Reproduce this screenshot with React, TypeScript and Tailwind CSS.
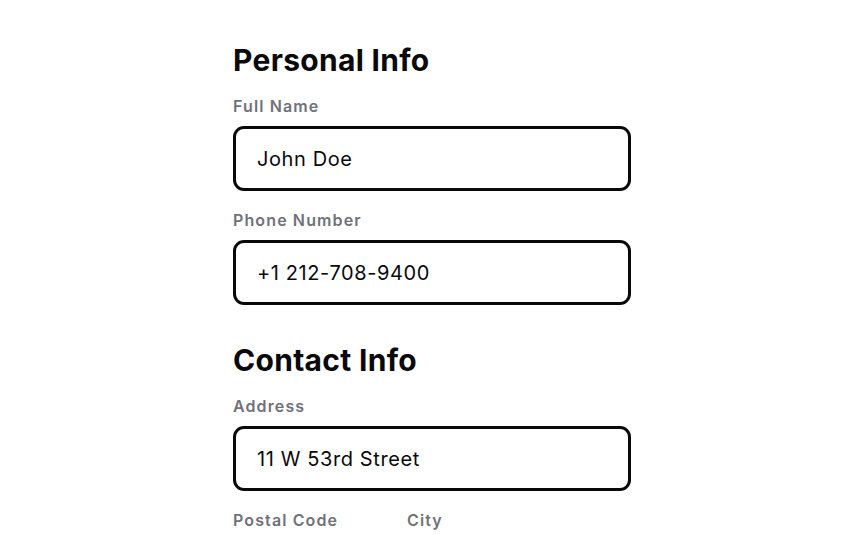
import React from "react";

const font = { fontFamily: "Inter, 'Noto Sans', sans-serif" };

const Field = ({
  label,
  value,
  className = "",
}: {
  label: string;
  value: string;
  className?: string;
}) => {
  return (
    <div className={"flex flex-col " + className}>
      <p className="text-[16px] leading-[24px] font-semibold tracking-[0.07em] text-[#71717a] mb-[8px]">
        {label}
      </p>
      <div
        className="h-[65px] w-full border-[3px] border-[#09090b] rounded-[11px]
          flex items-center pl-[21px] bg-white"
      >
        <span className="text-[20px] tracking-[0.03em] text-[#09090b]">{value}</span>
      </div>
    </div>
  );
};

export default function App() {
  return (
    <div className="w-[864px] h-[540px] bg-white overflow-hidden" style={font}>
      <div className="w-[398px] ml-[233px] pt-[42px] flex flex-col">
        <h1 className="text-[30px] leading-[36px] font-bold tracking-[0.01em] text-[#09090b] mb-[16px]">
          Personal Info
        </h1>
        <Field label="Full Name" value="John Doe" className="mb-[17px]" />
        <Field label="Phone Number" value="+1 212-708-9400" className="mb-[37px]" />

        <h1 className="text-[30px] leading-[36px] font-bold tracking-[0.01em] text-[#09090b] mb-[16px]">
          Contact Info
        </h1>
        <Field label="Address" value="11 W 53rd Street" className="mb-[17px]" />
        <div className="flex flex-row">
          <Field label="Postal Code" value="10019" className="w-[150px] mr-[24px]" />
          <Field label="City" value="New York" className="flex-1" />
        </div>
      </div>
    </div>
  );
}
